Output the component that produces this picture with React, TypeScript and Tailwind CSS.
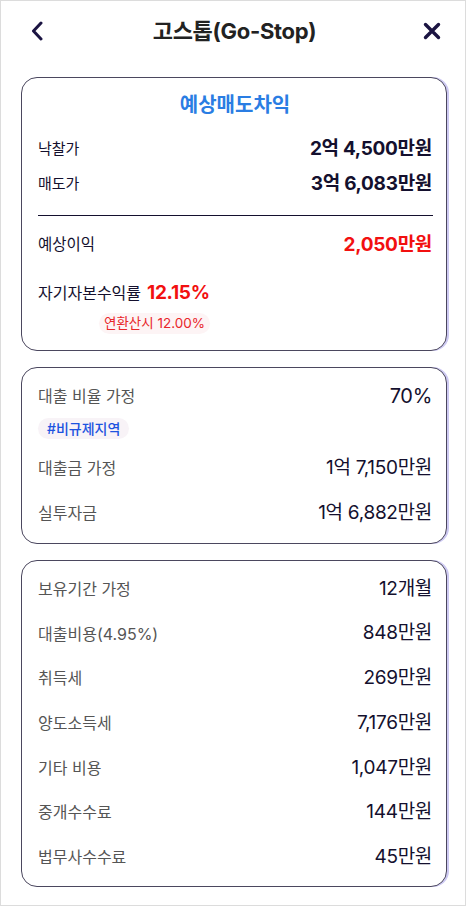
import React from "react";

const font = { fontFamily: 'Inter, "Noto Sans CJK KR", sans-serif' };

function Row({ label, value, labelCls = "text-[15px] text-[#14102e]", valueCls = "text-[19px] text-[#14102e]" }: { label: string; value: string; labelCls?: string; valueCls?: string }) {
  return (
    <div className="flex h-7 items-center justify-between">
      <span className={labelCls}>{label}</span>
      <span className={`tracking-[-0.3px] ${valueCls}`}>{value}</span>
    </div>
  );
}

const gray = "text-[16px] text-[#555]";

export default function App() {
  return (
    <div style={font} className="h-[906px] w-[466px] overflow-hidden border border-[#dcdcdc] bg-white">
      <div className="relative flex h-[60px] items-center justify-between px-[29px]">
        <svg width="12" height="20" viewBox="0 0 12 20" className="ml-[1px]">
          <path d="M10 2 L2.5 10 L10 18" fill="none" stroke="#1b1442" strokeWidth="3" strokeLinecap="round" strokeLinejoin="round" />
        </svg>
        <div className="pointer-events-none absolute left-0 right-0 pl-[3px] text-center text-[22px] font-bold tracking-[-0.3px] text-[#222]">고스톱(Go-Stop)</div>
        <svg width="18" height="18" viewBox="0 0 18 18" className="mr-[-5px]">
          <path d="M2.5 2.5 L15.5 15.5 M15.5 2.5 L2.5 15.5" fill="none" stroke="#1b1442" strokeWidth="3.4" strokeLinecap="round" />
        </svg>
      </div>

      <div className="mt-[16px] flex flex-col gap-4 pl-5 pr-[18px]">
        {/* Card 1 */}
        <div className="flex flex-col rounded-[16px] border border-[#4b475e] bg-white pl-4 pr-[14px] pt-[15px] pb-[16px] shadow-[2px_0_0_0_#cdc9f2]">
          <div className="flex h-6 items-center justify-center text-[20px] font-bold text-[#2a7de3]">예상매도차익</div>
          <div className="mt-[18px]">
            <Row label="낙찰가" value="2억 4,500만원" valueCls="text-[19px] font-bold text-[#14102e]" />
          </div>
          <div className="mt-[7px]">
            <Row label="매도가" value="3억 6,083만원" valueCls="text-[19px] font-bold text-[#14102e]" />
          </div>
          <div className="mt-[17px] mr-[-1px] h-px bg-[#14102e]" />
          <div className="mt-[15px]">
            <Row label="예상이익" labelCls="text-[15.5px] text-[#14102e]" value="2,050만원" valueCls="text-[19px] font-bold text-[#f21010]" />
          </div>
          <div className="mt-[20px] flex h-7 items-center gap-[6px]">
            <span className="text-[16px] text-[#14102e]">자기자본수익률</span>
            <span className="text-[19px] font-bold tracking-[-0.3px] text-[#f21010]">12.15%</span>
          </div>
          <div className="mt-[6px] ml-[61px] flex h-[21px] w-fit items-center rounded-full bg-[#fdf4f5] px-[5px] text-[13.5px] text-[#e8262a]">연환산시 12.00%</div>
        </div>

        {/* Card 2 */}
        <div className="flex flex-col rounded-[16px] border border-[#4b475e] bg-white pl-4 pr-[14px] pt-[14px] pb-[16px] shadow-[2px_0_0_0_#cdc9f2]">
          <Row label="대출 비율 가정" value="70%" labelCls={gray} valueCls="text-[20px] text-[#14102e]" />
          <div className="mt-[8px] flex h-[21px] w-fit items-center rounded-full bg-[#f8f3f7] px-[9px] text-[14px] font-medium text-[#1e53e0]">#비규제지역</div>
          <div className="mt-[15px]">
            <Row label="대출금 가정" value="1억 7,150만원" labelCls={gray} />
          </div>
          <div className="mt-[17px]">
            <Row label="실투자금" value="1억 6,882만원" labelCls={gray} />
          </div>
        </div>

        {/* Card 3 */}
        <div className="flex flex-col gap-[16.7px] rounded-[16px] border border-[#4b475e] bg-white pl-4 pr-[14px] pt-[14px] pb-[15px] shadow-[2px_0_0_0_#cdc9f2]">
          <Row label="보유기간 가정" value="12개월" labelCls={gray} />
          <Row label="대출비용(4.95%)" value="848만원" labelCls={gray} />
          <Row label="취득세" value="269만원" labelCls={gray} />
          <Row label="양도소득세" value="7,176만원" labelCls={gray} />
          <Row label="기타 비용" value="1,047만원" labelCls={gray} />
          <Row label="중개수수료" value="144만원" labelCls={gray} />
          <Row label="법무사수수료" value="45만원" labelCls={gray} />
        </div>
      </div>
    </div>
  );
}
